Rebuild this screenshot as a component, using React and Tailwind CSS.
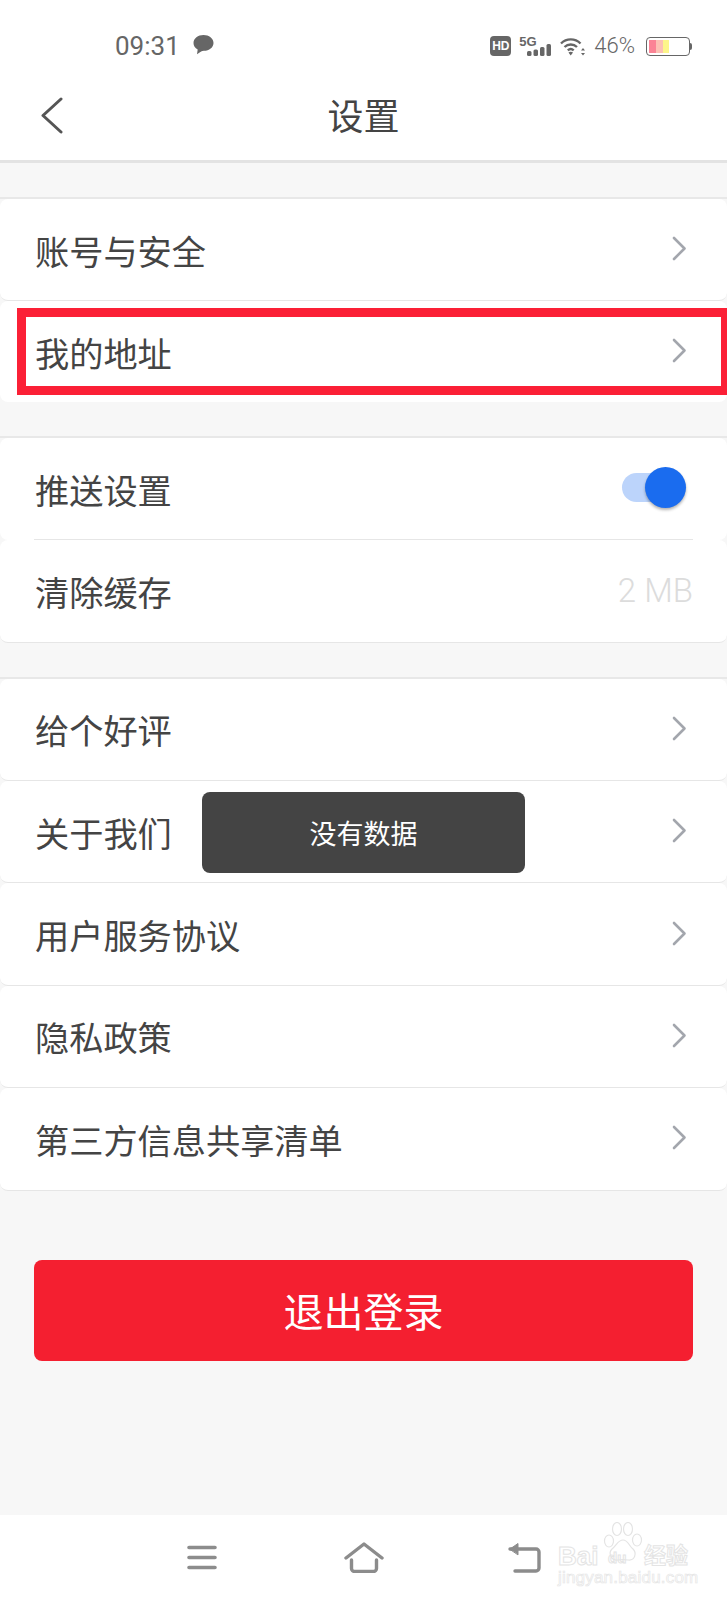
import React from "react";

const FONT = "font-['Noto_Sans_CJK_SC','Noto_Sans',sans-serif]";

const Chevron = () => (
  <svg width="15" height="25" viewBox="0 0 15 25" fill="none" stroke="#a3a6ad" strokeWidth="2.6" strokeLinecap="round" strokeLinejoin="round" className="mr-[6px] -mt-[2px]">
    <path d="M2 2l10.5 10.5L2 23" />
  </svg>
);

const Row = ({ label, children, last, inset }) => (
  <div className={"relative flex items-center justify-between bg-white rounded-lg pl-[35px] pr-[34px] " + (last ? "h-[101px] " : "h-[102.4px] ") + (last || inset ? "" : "border-b border-[#e6e6e6]")}>
    <span className="text-[34.2px] leading-none text-[#444]">{label}</span>
    {children || <Chevron />}
    {inset && <div className="absolute left-[34px] right-[34px] bottom-[-1px] h-[2px] bg-[#e6e6e6]" />}
  </div>
);

const StatusBar = () => (
  <div className="h-[80px] flex items-center justify-between pl-[115px] pr-[35px] pt-[12px] text-[#666]">
    <div className="flex items-center gap-[13px]">
      <span className="font-['Roboto',sans-serif] font-normal text-[26px] leading-none">09:31</span>
      <svg width="21" height="20" viewBox="0 0 21 20" fill="#666" className="-mt-[3px]">
        <path d="M10.5 0C16 0 20.5 3.4 20.5 8c0 4.400-4.300 7.800-9.600 7.800-1 0-2 .2-2.800.7L4 19.300l.7-4.800C2 13 .5 10.700.5 8 .5 3.400 5 0 10.500 0z" />
      </svg>
    </div>
    <div className="flex items-center">
      <div className="w-[21px] h-[20px] rounded-[4px] bg-[#666] text-white text-[12px] font-bold leading-[20px] text-center font-['Liberation_Sans',sans-serif]">HD</div>
      <div className="relative w-[33px] h-[20px] ml-[8px]">
        <span className="absolute left-0 -top-[1px] text-[13px] leading-none font-bold font-['Liberation_Sans',sans-serif]">5G</span>
        <svg width="25" height="12" viewBox="0 0 25 12" fill="#666" className="absolute left-[8px] bottom-0">
          <rect x="0" y="7" width="4.500" height="5" rx="1.500" />
          <rect x="6.500" y="5.500" width="4.500" height="6.500" rx="1.500" />
          <rect x="13" y="3" width="4.500" height="9" rx="1.500" />
          <rect x="19.500" y="0" width="4.500" height="12" rx="1.500" />
        </svg>
      </div>
      <svg width="26" height="19" viewBox="0 0 26 19" fill="none" stroke="#666" strokeWidth="2.400" className="ml-[8px]">
        <path d="M1 6.500C6.500 1 15 1 20.500 6.500" />
        <path d="M4.500 10c3.500-3.300 9-3.300 12.500 0" />
        <path d="M7.800 13.300c1.700-1.500 4.200-1.500 5.900 0" />
        <path d="M10.700 18.500L8.500 15.500c1.300-1 3.200-1 4.500 0z" fill="#666" stroke="none" />
        <path d="M23 11l2 2.500h-4zM23 18.500l-2-2.500h4z" fill="#666" stroke="none" />
      </svg>
      <span className="ml-[8px] font-['Roboto',sans-serif] font-light text-[22px] leading-none">46%</span>
      <div className="ml-[11px] flex items-center">
        <div className="w-[44px] h-[19px] rounded-[4px] border-[1.500px] border-[#666] p-[2px] flex">
          <div className="w-[7px] bg-[#fb8395]" />
          <div className="w-[7px] bg-[#fcc0b4]" />
          <div className="w-[6px] bg-[#fdf58a]" />
        </div>
        <div className="w-[2px] h-[7px] bg-[#666] rounded-r-sm" />
      </div>
    </div>
  </div>
);

const Watermark = () => (
  <div className="absolute left-[558px] top-[1522px] w-[130px] h-[64px] font-['Liberation_Sans',sans-serif]">
    <svg width="44" height="44" viewBox="0 0 44 44" fill="none" stroke="#e4e4e4" strokeWidth="1.200" className="absolute left-[42px] top-0">
      <ellipse cx="9" cy="19" rx="4.500" ry="6" />
      <ellipse cx="17" cy="7" rx="4.500" ry="6.500" />
      <ellipse cx="28" cy="7" rx="4.500" ry="6.500" />
      <ellipse cx="37" cy="18" rx="4.500" ry="6" />
      <path d="M23 18c-5 0-6 5-11 9-4 4-1 12 6 11 3-.5 7-.5 10 0 7 1 9-7 5-11-4-3-5-9-10-9z" />
    </svg>
    <span className="absolute left-0 top-[21px] text-[26px] leading-none font-bold text-transparent [-webkit-text-stroke:1px_#e4e4e4]">Bai</span>
    <span className="absolute left-[50px] top-[28px] text-[15px] leading-none font-bold text-transparent [-webkit-text-stroke:1px_#e4e4e4]">du</span>
    <span className="absolute left-[86px] top-[20px] text-[22px] leading-none font-bold text-transparent [-webkit-text-stroke:1px_#e4e4e4] font-['Noto_Sans_CJK_SC',sans-serif]">经验</span>
    <span className="absolute left-0 top-[47px] text-[17px] leading-none tracking-[0.2px] text-transparent [-webkit-text-stroke:0.7px_#e6e6e6]">jingyan.baidu.com</span>
  </div>
);

export default function App() {
  return (
    <div className={"relative w-[727px] h-[1600px] overflow-hidden flex flex-col bg-[#f7f7f7] " + FONT}>
      <div className="bg-white border-b-[3px] border-[#e3e3e3]">
        <StatusBar />
        <div className="relative h-[80px] flex items-center justify-center">
          <svg width="24" height="38" viewBox="0 0 24 38" fill="none" stroke="#555" strokeWidth="3" strokeLinecap="round" strokeLinejoin="round" className="absolute left-[40px] top-[17px]">
            <path d="M21 2L3 18.500 21 35" />
          </svg>
          <span className="text-[36px] leading-none text-[#444] -mt-[13px]">设置</span>
        </div>
      </div>

      <div className="mt-[34px] border-t-2 border-[#e8e8e8]">
        <Row label="账号与安全" />
        <div className="relative">
          <Row label="我的地址" last />
          <div className="absolute left-[17px] right-0 top-[7px] h-[87px] border-[9px] border-[#fb2036] border-r-[6px]" />
        </div>
      </div>

      <div className="mt-[33.4px] border-t-2 border-[#e8e8e8]">
        <Row label="推送设置" inset>
          <div className="relative w-[64px] h-[41px] mr-[7px] flex items-center -mt-[3px]">
            <div className="w-[50px] h-[29px] rounded-full bg-[#bcd4fb]" />
            <div className="absolute right-0 top-0 w-[41px] h-[41px] rounded-full bg-[#1a6cef] shadow-[0_2px_3px_rgba(0,0,0,0.3)]" />
          </div>
        </Row>
        <Row label="清除缓存">
          <span className="font-['Roboto',sans-serif] font-light text-[33px] leading-none text-[#dcdcdc]">2 MB</span>
        </Row>
      </div>

      <div className="mt-[34px] border-t-2 border-[#e8e8e8]">
        <Row label="给个好评" />
        <Row label="关于我们" />
        <Row label="用户服务协议" />
        <Row label="隐私政策" />
        <Row label="第三方信息共享清单" />
      </div>

      <div className="mt-[69px] mx-[34px] h-[101px] rounded-lg bg-[#f41f30] flex items-center justify-center text-white text-[40px] leading-none">
        退出登录
      </div>

      <div className="mt-auto h-[85px] bg-white flex items-center pl-[187px]">
        <svg width="30" height="25" viewBox="0 0 30 25" fill="none" stroke="#8c8c8c" strokeWidth="3.600" strokeLinecap="round">
          <path d="M2 2.500h26M2 12.500h26M2 22.500h26" />
        </svg>
        <svg width="40" height="31" viewBox="0 0 40 31" fill="none" stroke="#8c8c8c" strokeWidth="3.400" strokeLinecap="round" strokeLinejoin="round" className="ml-[127px]">
          <path d="M2 16L20 2l18 14" />
          <path d="M7.500 18v8.500a3 3 0 0 0 3 3h19a3 3 0 0 0 3-3V18" />
        </svg>
        <svg width="34" height="31" viewBox="0 0 34 31" fill="none" stroke="#8c8c8c" strokeWidth="3.400" strokeLinecap="round" strokeLinejoin="round" className="ml-[123px]">
          <path d="M3 7h26a3 3 0 0 1 3 3v16a3 3 0 0 1-3 3H8" />
          <path d="M3 7l8-5.500v11z" fill="#8c8c8c" strokeWidth="1" />
        </svg>
      </div>
      <Watermark />

      <div className="absolute left-[202px] top-[792px] w-[323px] h-[81px] rounded-lg bg-[#444] flex items-center justify-center text-white text-[27px] leading-none">
        没有数据
      </div>
    </div>
  );
}
